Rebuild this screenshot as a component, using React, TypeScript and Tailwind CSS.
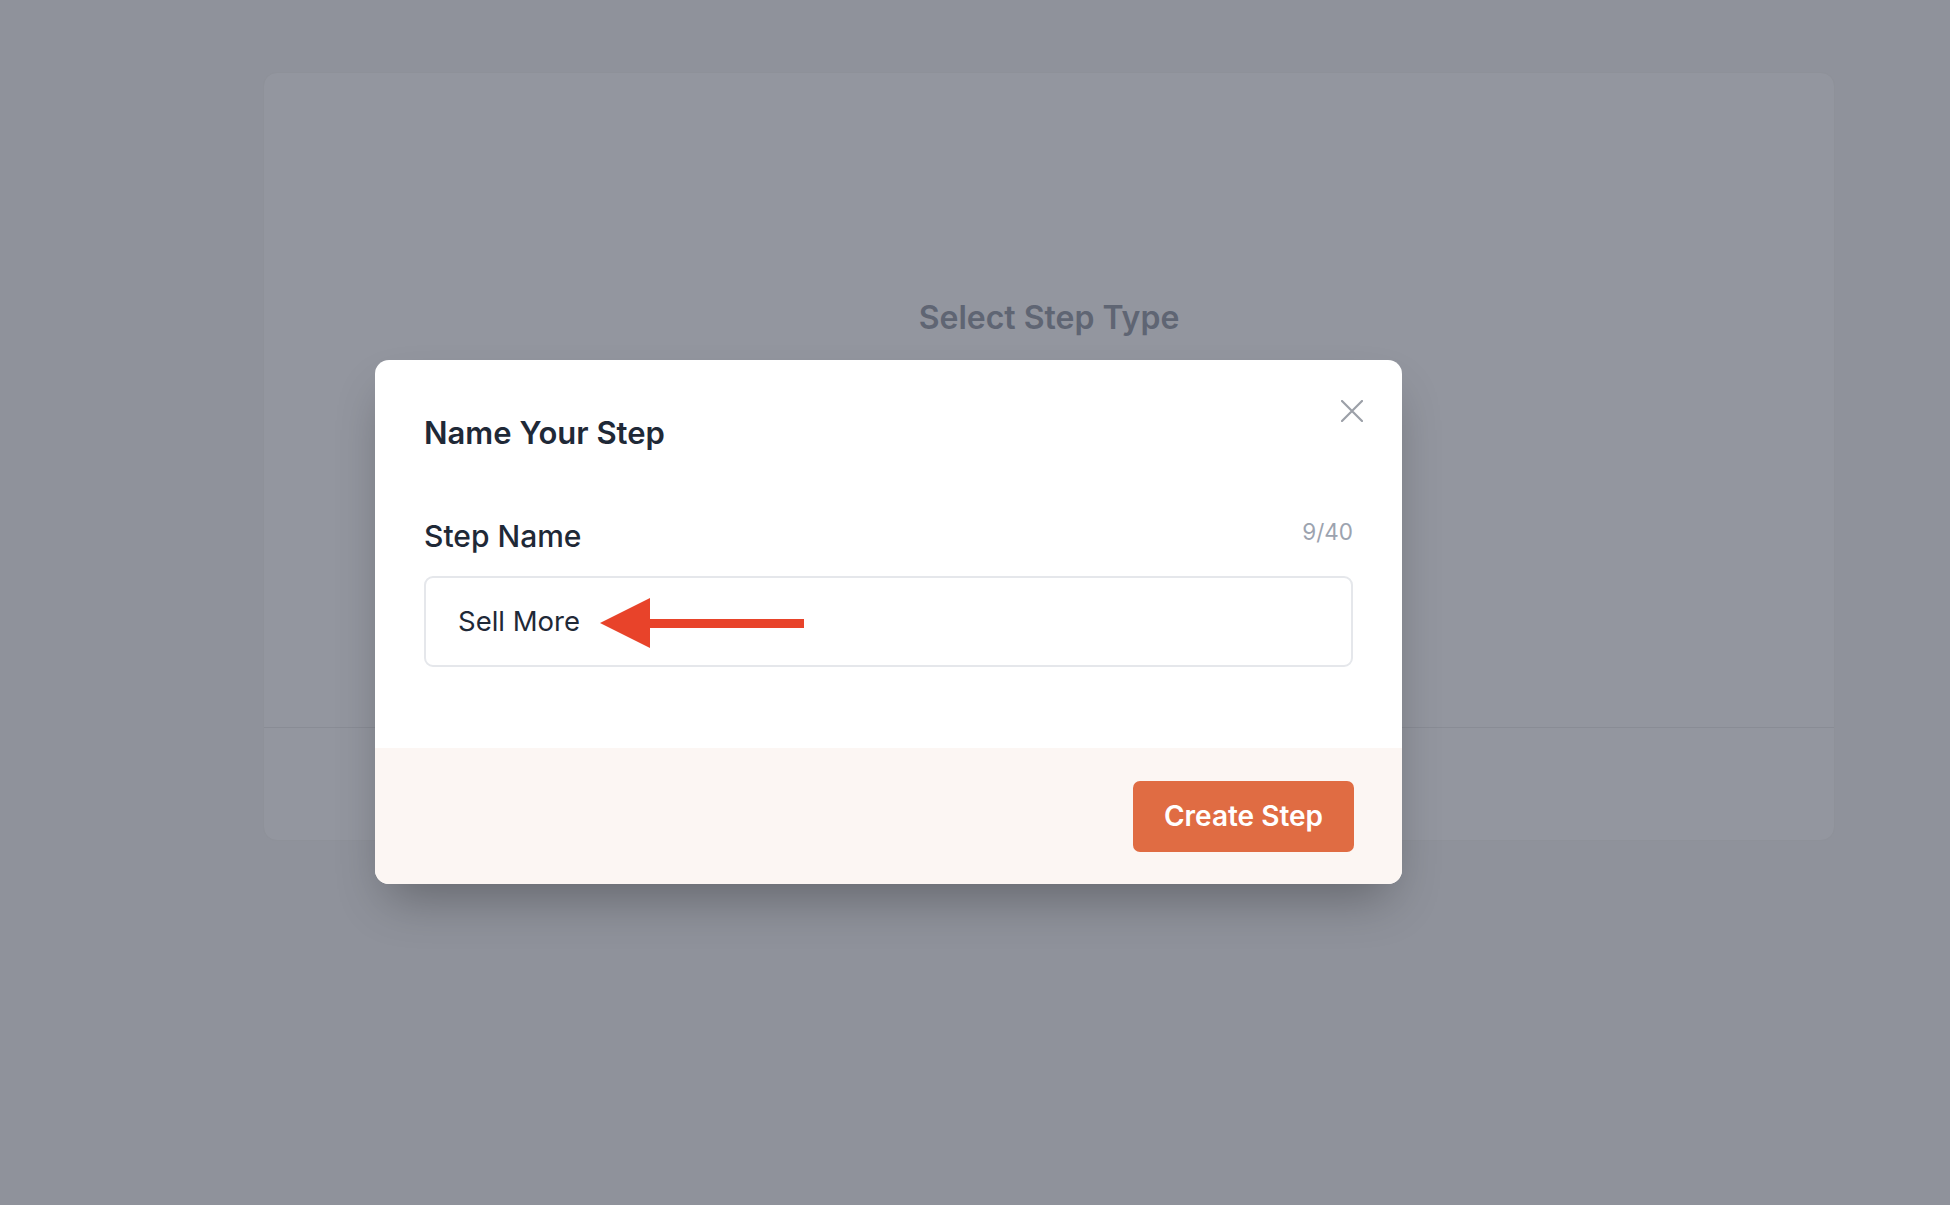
import React from "react";

export default function App() {
  return (
    <div className="relative w-[1950px] h-[1205px] overflow-hidden bg-[#8f929b] pt-[72px] pl-[263px] font-['Inter','Noto_Sans',sans-serif]">
      {/* dimmed page behind */}
      <div className="w-[1572px] h-[769px] rounded-[14px] bg-[#93969f] border border-[#8e9199] flex flex-col">
        <div className="h-[654px] pt-[229px] text-center">
          <h2 className="text-[32px] leading-none font-semibold text-[#5f6573]">Select Step Type</h2>
        </div>
        <div className="flex-1 border-t border-[#898c95]" />
      </div>

      {/* modal */}
      <div className="absolute left-[375px] top-[360px] w-[1027px] rounded-[14px] bg-white overflow-hidden shadow-[0_25px_50px_-12px_rgba(0,0,0,0.3)]">
        <button className="absolute right-[39px] top-[40px] w-[22px] h-[22px]" aria-label="Close">
          <svg width="22" height="22" viewBox="0 0 22 22" fill="none">
            <path d="M1 1L21 21M21 1L1 21" stroke="#9ca0a8" strokeWidth="2.2" strokeLinecap="round" />
          </svg>
        </button>
        <div className="px-[49px] pt-[57px] pb-[81px]">
          <h3 className="text-[31px] leading-none font-semibold text-[#1f2937]">Name Your Step</h3>
          <div className="mt-[73px] flex items-start justify-between">
            <label className="text-[30px] leading-none font-medium text-[#1f2937]">Step Name</label>
            <span className="text-[22.5px] leading-none text-[#9ca3af]">9/40</span>
          </div>
          <div className="relative mt-[25px] h-[91px] border-2 border-[#e5e7eb] rounded-[9px] flex items-center pl-[32px]">
            <span className="text-[27.5px] leading-none text-[#1f2937]">Sell More</span>
            <svg className="absolute left-[174px] top-[20px]" width="204" height="50" viewBox="0 0 204 50">
              <polygon points="0,25 50,0 50,50" fill="#e8432a" />
              <rect x="49" y="21" width="155" height="9" fill="#e8432a" />
            </svg>
          </div>
        </div>
        <div className="h-[136px] bg-[#fcf6f3] flex items-center justify-end pr-[48px]">
          <button className="w-[221px] h-[71px] rounded-[7px] bg-[#e06c43] text-white text-[28px] leading-none font-semibold">
            Create Step
          </button>
        </div>
      </div>
    </div>
  );
}
